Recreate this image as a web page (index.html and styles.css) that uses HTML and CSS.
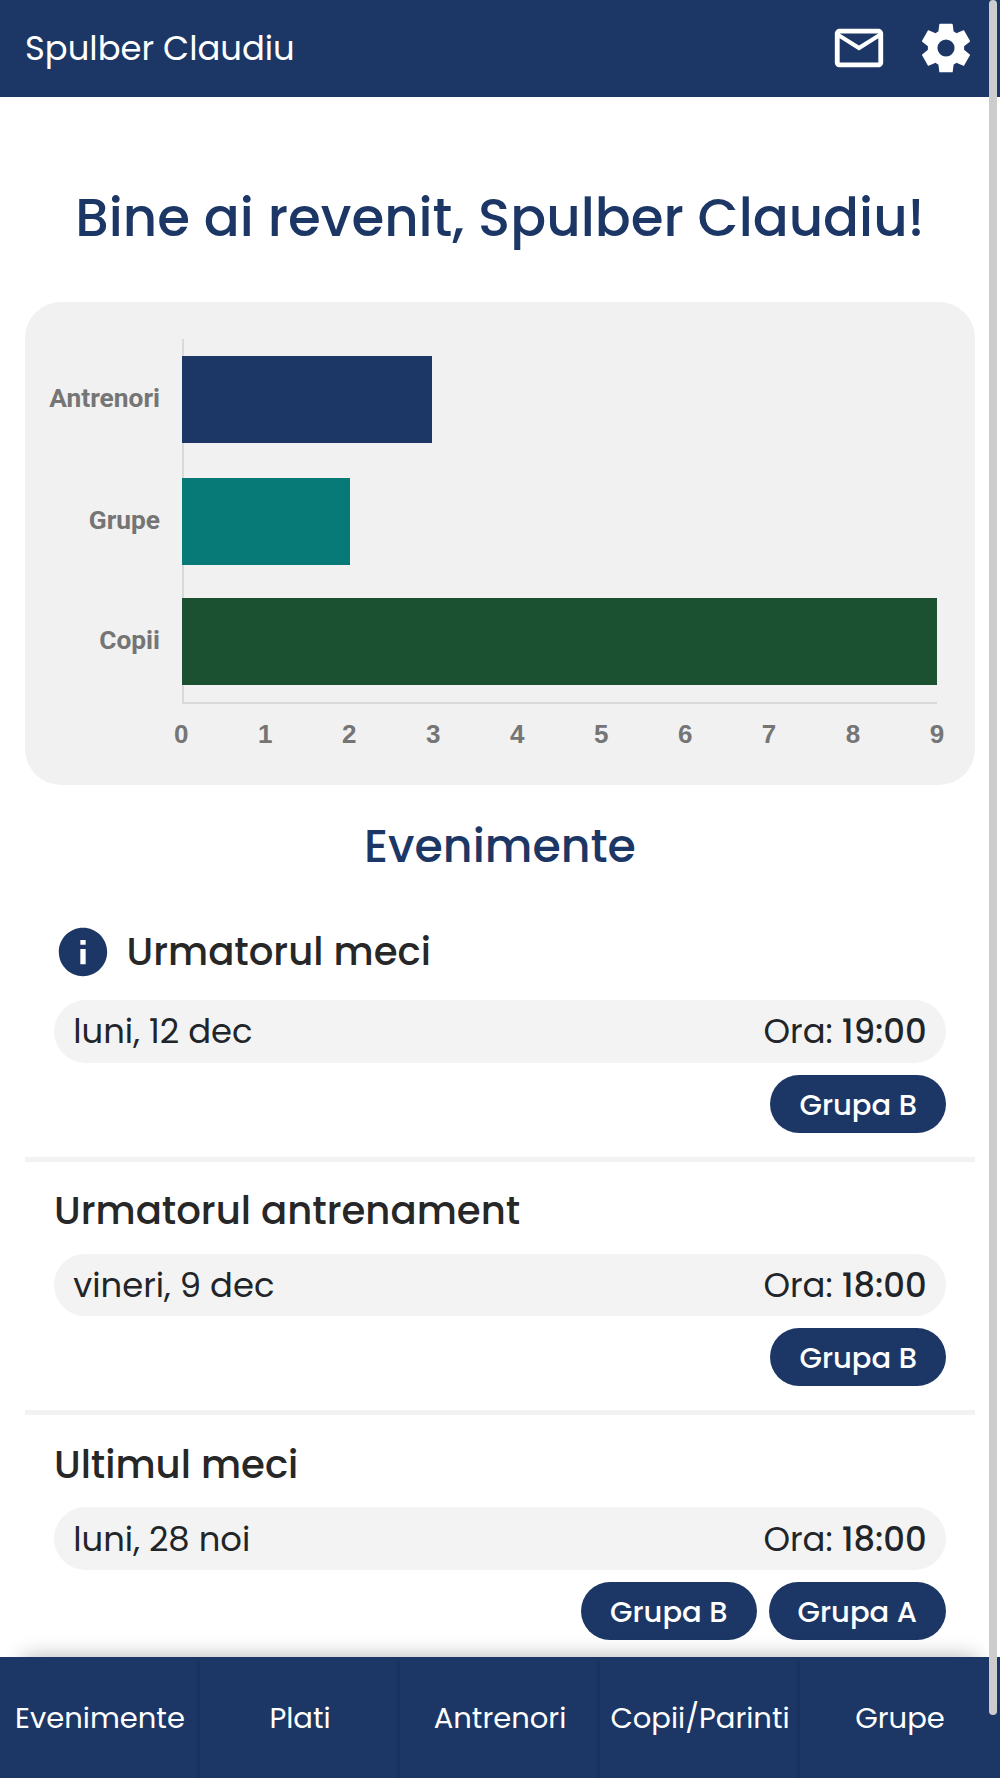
FILE: index.html
```html
<!DOCTYPE html>
<html lang="ro">
<head>
<meta charset="utf-8">
<title>Acasa</title>
<link rel="stylesheet" href="styles.css">
</head>
<body>
<div class="app">
  <header class="topbar">
    <span class="topbar-name">Spulber Claudiu</span>
    <div class="topbar-actions">
      <svg class="icon" viewBox="0 0 24 24" aria-label="Mesaje"><path d="M22 6c0-1.1-.9-2-2-2H4c-1.1 0-2 .9-2 2v12c0 1.1.9 2 2 2h16c1.1 0 2-.9 2-2V6zm-2 0l-8 5-8-5h16zm0 12H4V8l8 5 8-5v10z"/></svg>
      <svg class="icon" viewBox="0 0 24 24" aria-label="Setari"><path d="m9.25 22-.4-3.2q-.325-.125-.612-.3-.288-.175-.563-.375L4.8 19.3q-.2.05-.3-.1L2.1 15q-.1-.2.05-.35l2.375-1.975Q4.5 12.5 4.5 12.337v-.675q0-.162.025-.337L2.15 9.4Q2 9.25 2.1 9l2.4-4.2q.1-.15.3-.1l2.875 1.175q.275-.2.575-.375.3-.175.6-.3l.37-2.95q.03-.25.3-.25h4.96q.27 0 .3.25l.37 2.95q.325.125.613.3.287.175.562.375L19.2 4.7q.2-.05.3.1L21.9 9q.1.25-.05.4l-2.375 1.925q.025.175.025.337v.675q0 .163-.025.338l2.375 1.975q.15.15.05.35l-2.4 4.2q-.1.15-.3.1l-2.875-1.175q-.275.2-.575.375-.3.175-.6.3l-.4 3.2ZM12 15.55a3.55 3.55 0 1 0 0-7.1 3.55 3.55 0 0 0 0 7.1Z" fill-rule="evenodd"/></svg>
    </div>
  </header>

  <main class="content">
    <h1 class="welcome">Bine ai revenit, Spulber Claudiu!</h1>

    <section class="chart">
      <div class="chart-labels">
        <span class="chart-label">Antrenori</span>
        <span class="chart-label">Grupe</span>
        <span class="chart-label">Copii</span>
      </div>
      <div class="chart-plot">
        <div class="bar bar-navy" style="width: 33.15%"></div>
        <div class="bar bar-teal" style="width: 22.2%"></div>
        <div class="bar bar-green" style="width: 100%"></div>
      </div>
      <div class="chart-ticks">
        <span>0</span><span>1</span><span>2</span><span>3</span><span>4</span><span>5</span><span>6</span><span>7</span><span>8</span><span>9</span>
      </div>
    </section>

    <h2 class="section-title">Evenimente</h2>

    <article class="event event-first">
      <h3 class="event-title"><svg class="icon icon-info" viewBox="0 0 24 24"><path d="M12 2C6.48 2 2 6.48 2 12s4.48 10 10 10 10-4.48 10-10S17.52 2 12 2zm1.1 15.1h-2.2v-6.3h2.2v6.3zm0-8.1h-2.2V7h2.2v2z"/></svg>Urmatorul meci</h3>
      <div class="event-when"><span>luni, 12 dec</span><span>Ora: <b>19:00</b></span></div>
      <div class="badges"><span class="badge">Grupa B</span></div>
    </article>
    <article class="event">
      <h3 class="event-title">Urmatorul antrenament</h3>
      <div class="event-when"><span>vineri, 9 dec</span><span>Ora: <b>18:00</b></span></div>
      <div class="badges"><span class="badge">Grupa B</span></div>
    </article>
    <article class="event">
      <h3 class="event-title">Ultimul meci</h3>
      <div class="event-when"><span>luni, 28 noi</span><span>Ora: <b>18:00</b></span></div>
      <div class="badges"><span class="badge">Grupa B</span><span class="badge">Grupa A</span></div>
    </article>
  </main>

  <nav class="tabs">
    <a class="tab">Evenimente</a>
    <a class="tab">Plati</a>
    <a class="tab">Antrenori</a>
    <a class="tab">Copii/Parinti</a>
    <a class="tab">Grupe</a>
  </nav>
  <div class="scroll-thumb"></div>
</div>
</body>
</html>
```
FILE: styles.css
```css
* {
  box-sizing: border-box;
}

body {
  margin: 0;
  background: #fff;
  color: #212529;
  font-family: "Poppins", "Inter", sans-serif;
  font-size: 33.8px;
}

.app {
  position: relative;
  display: flex;
  flex-direction: column;
  height: 1778px;
  overflow: hidden;
}

.icon {
  display: block;
  width: 58px;
  height: 58px;
  fill: currentColor;
}

/* Top bar */
.topbar {
  display: flex;
  flex: none;
  align-items: center;
  justify-content: space-between;
  height: 96.6px;
  padding: 0 25px;
  background: #1c3766;
  color: #fff;
}

.topbar-name {
  padding-top: 2px;
}

.topbar-actions {
  display: flex;
  gap: 29px;
}

/* Page content */
.content {
  flex: 1;
  min-height: 0;
  padding: 0 25px;
}

.welcome {
  margin: 81.4px 0 44px;
  color: #1c3766;
  font-size: 53.1px;
  font-weight: 500;
  line-height: 80px;
  text-align: center;
  white-space: nowrap;
}

.section-title {
  margin: 25.6px 0 42px;
  color: #1c3766;
  font-size: 45.9px;
  font-weight: 500;
  line-height: 70px;
  text-align: center;
}

/* Bar chart */
.chart {
  display: grid;
  grid-template: 365px 1fr / 135px 755px;
  column-gap: 22px;
  height: 483px;
  padding: 37px 0 0;
  border-radius: 36px;
  background: #f1f1f1;
  color: #757575;
  font-size: 26.3px;
  font-weight: 700;
}

.chart-labels,
.chart-plot {
  display: flex;
  flex-direction: column;
  gap: 35px;
  padding-top: 17px;
}

.chart-labels {
  font-family: Roboto, sans-serif;
  text-align: right;
}

.chart-label {
  height: 87px;
  line-height: 85px;
}

.chart-label:last-child {
  margin-top: -2px;
}

.chart-plot {
  border-bottom: 2px solid #dadada;
  background: linear-gradient(#dadada, #dadada) left / 2px 100% no-repeat;
}

.bar {
  height: 87px;
}

.bar-navy {
  background: #1c3766;
}

.bar-teal {
  background: #077977;
}

.bar-green {
  margin-top: -2px;
  background: #1b5130;
}

.chart-ticks {
  display: flex;
  grid-column: 2;
  justify-content: space-between;
  margin: 14.5px -42px 0 -42.7px;
  font-family: "Liberation Sans", Arial, sans-serif;
  font-size: 26px;
  line-height: 32px;
}

.chart-ticks span {
  width: 84px;
  text-align: center;
}

/* Events */
.event {
  padding: 19.3px 29px 24px;
  border-bottom: 5px solid #f2f2f2;
}

.event:last-child {
  border-bottom: 0;
}

.event-first {
  padding-top: 0;
}

.event-title {
  display: flex;
  align-items: center;
  gap: 14.5px;
  height: 58px;
  margin: 0 0 14.6px;
  padding-top: 1.5px;
  color: #272727;
  font-size: 38.65px;
  font-weight: 500;
}

.event-first .event-title {
  margin-bottom: 19.4px;
  padding-top: 0;
}

.icon-info {
  color: #1c3766;
}

.event-when {
  display: flex;
  align-items: center;
  justify-content: space-between;
  height: 62.8px;
  margin-bottom: 12px;
  padding: 2px 19.3px 0;
  border-radius: 32px;
  background: #f3f3f3;
}

.event-when b {
  font-weight: 500;
}

.badges {
  display: flex;
  justify-content: flex-end;
  gap: 12px;
}

.badge {
  height: 58px;
  padding: 0 29px;
  border-radius: 29px;
  background: #1c3766;
  color: #fff;
  font-size: 29px;
  font-weight: 500;
  line-height: 61px;
}

/* Bottom navigation */
.tabs {
  display: grid;
  flex: none;
  grid-template-columns: repeat(5, 1fr);
  height: 121px;
  background: #1c3766;
  box-shadow: 0 -24px 20px -24px rgba(0, 0, 0, 0.3);
  color: #fff;
  font-size: 29px;
}

.tab {
  display: flex;
  align-items: center;
  justify-content: center;
  padding-top: 2px;
}

.tab:not(:last-child) {
  background: linear-gradient(90deg, transparent, rgba(0, 0, 0, 0.1)) right bottom / 6px calc(100% - 4px) no-repeat;
}

.scroll-thumb {
  position: absolute;
  top: 0;
  right: 3.5px;
  width: 7.5px;
  height: 1715px;
  border-radius: 4px;
  background: #cdcdcd;
}
```
